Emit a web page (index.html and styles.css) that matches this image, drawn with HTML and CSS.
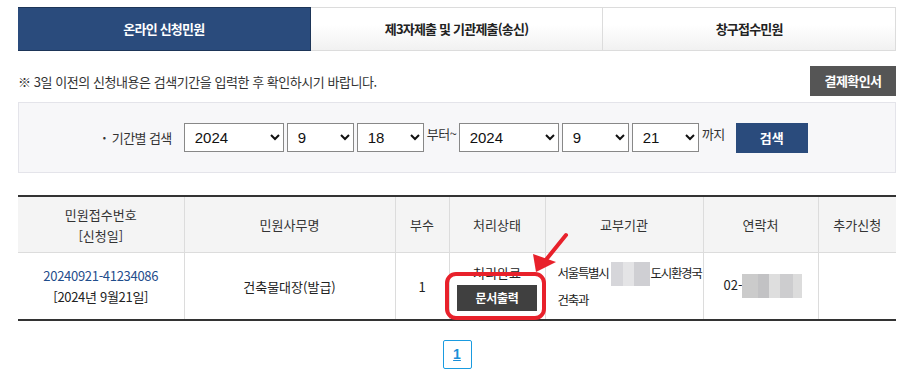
FILE: index.html
```html
<!DOCTYPE html>
<html lang="ko">
    <head>
        <meta charset="utf-8">
        <title>신청민원 조회</title>
        <link rel="stylesheet" href="styles.css">
    </head>
    <body>
        <div class="wrap">
            <ul class="tabs">
                <li class="tab on">온라인 신청민원</li>
                <li class="tab">제3자제출 및 기관제출(송신)</li>
                <li class="tab">창구접수민원</li>
            </ul>

            <div class="notice_row">
                <p class="notice">※ 3일 이전의 신청내용은 검색기간을 입력한 후 확인하시기 바랍니다.</p>
                <a class="btn_pay" href="#">결제확인서</a>
            </div>

            <div class="search_box">
                <span class="search_label">기간별 검색</span>
                <select class="sel_year"><option>2024</option></select>
                <select class="sel_small"><option>9</option></select>
                <select class="sel_small"><option>18</option></select>
                <span class="search_txt">부터~</span>
                <select class="sel_year"><option>2024</option></select>
                <select class="sel_small"><option>9</option></select>
                <select class="sel_small"><option>21</option></select>
                <span class="search_txt">까지</span>
                <a class="btn_search" href="#">검색</a>
            </div>

            <div class="table_wrap">
                <table class="list">
                    <colgroup>
                        <col style="width:166px">
                        <col style="width:211px">
                        <col style="width:54px">
                        <col style="width:96px">
                        <col style="width:158px">
                        <col style="width:115px">
                        <col style="width:78px">
                    </colgroup>
                    <thead>
                        <tr>
                            <th>민원접수번호<br>[신청일]</th>
                            <th>민원사무명</th>
                            <th>부수</th>
                            <th>처리상태</th>
                            <th>교부기관</th>
                            <th>연락처</th>
                            <th>추가신청</th>
                        </tr>
                    </thead>
                    <tbody>
                        <tr>
                            <td class="receipt"><a class="num_link" href="#">20240921-41234086</a><br>[2024년 9월21일]</td>
                            <td>건축물대장(발급)</td>
                            <td>1</td>
                            <td class="state">처리완료<br><a class="btn_print" href="#">문서출력</a></td>
                            <td class="left addr">서울특별시<span class="mosaic m_addr"></span>도시환경국<br>건축과</td>
                            <td class="left phone">02-<span class="mosaic m_tel"></span></td>
                            <td></td>
                        </tr>
                    </tbody>
                </table>

                <svg class="mark" width="560" height="130" viewBox="0 0 560 130">
                    <rect x="429" y="79" width="97" height="44" rx="9" ry="9" fill="none" stroke="#e8212b" stroke-width="4"/>
                    <line x1="548" y1="40" x2="527" y2="66" stroke="#e8212b" stroke-width="4" stroke-linecap="round"/>
                    <polygon points="518,77 515,59 538,67" fill="#e8212b"/>
                </svg>
            </div>

            <div class="paging">
                <a class="page on" href="#">1</a>
            </div>
        </div>
    </body>
</html>
```

FILE: styles.css
```css
body {
    margin: 0;
    padding: 0;
    font-family: "Noto Sans CJK KR", "Noto Sans", sans-serif;
    font-size: 13px;
    color: #333333;
    background: #ffffff;
}

a {
    text-decoration: none;
}

.wrap {
    width: 878px;
    margin: 0 0 0 18px;
    padding-top: 7px;
}

/* tabs */
.tabs {
    display: flex;
    margin: 0;
    padding: 0;
    list-style: none;
}

.tab {
    flex: 1;
    height: 42px;
    line-height: 42px;
    text-align: center;
    font-size: 13px;
    font-weight: 700;
    letter-spacing: -0.8px;
    color: #222222;
    border: 1px solid #dcdcdc;
    border-left: 0;
    background: linear-gradient(#ffffff 40%, #f1f1f1);
}

.tab.on {
    color: #ffffff;
    background: #2a4b7c;
    border-color: #1d3558;
}

/* notice */
.notice_row {
    display: flex;
    align-items: center;
    justify-content: space-between;
    margin-top: 15px;
}

.notice {
    margin: 0;
    font-size: 13px;
    letter-spacing: -0.45px;
    color: #333333;
}

.btn_pay {
    display: block;
    width: 86px;
    height: 30px;
    line-height: 30px;
    text-align: center;
    font-size: 13px;
    font-weight: 700;
    letter-spacing: -0.6px;
    color: #ffffff;
    background: #555555;
}

/* search */
.search_box {
    display: flex;
    align-items: center;
    justify-content: center;
    height: 69px;
    margin-top: 6px;
    padding-right: 4px;
    border: 1px solid #e4e4ea;
    background: #f7f7f9;
}

.search_label {
    margin-right: 12px;
    font-size: 13px;
    letter-spacing: -0.6px;
    color: #333333;
}

.search_label:before {
    content: "·";
    margin-right: 6px;
    font-weight: 700;
}

select {
    height: 29px;
    margin-right: 3px;
    padding: 0 4px 0 6px;
    font-family: "Liberation Sans", Arial, sans-serif;
    font-size: 15px;
    color: #111111;
    border: 1px solid #888888;
    border-radius: 0;
    background: #ffffff;
}

.sel_year {
    width: 100px;
}

.sel_small {
    width: 67px;
}

.search_txt {
    margin: 0 2px 8px 0;
    font-size: 13px;
    letter-spacing: -0.4px;
    color: #333333;
}

.btn_search {
    display: block;
    width: 72px;
    height: 30px;
    margin-left: 9px;
    line-height: 30px;
    text-align: center;
    font-size: 13px;
    font-weight: 700;
    color: #ffffff;
    background: #2a4b7c;
}

/* table */
.table_wrap {
    position: relative;
    margin-top: 22px;
}

.list {
    width: 100%;
    table-layout: fixed;
    border-collapse: collapse;
    border-top: 2px solid #333333;
    border-bottom: 2px solid #333333;
}

.list th {
    height: 55px;
    padding: 0;
    font-size: 13px;
    font-weight: 400;
    line-height: 21px;
    color: #333333;
    background: #f4f4f4;
    border-left: 1px solid #dcdcdc;
    border-bottom: 1px solid #dcdcdc;
}

.list td {
    height: 66px;
    padding: 0;
    text-align: center;
    font-size: 13px;
    line-height: 21px;
    color: #222222;
    border-left: 1px solid #dcdcdc;
}

.list th:first-child,
.list td:first-child {
    border-left: 0;
}

.list td.left {
    text-align: left;
    padding-left: 12px;
}

.list td.receipt {
    letter-spacing: -0.3px;
}

.list td.addr {
    font-size: 12.5px;
    letter-spacing: -1.3px;
    line-height: 27px;
}

.list td.phone {
    padding-left: 20px;
}

.num_link {
    color: #1f4d8c;
}

.state {
    line-height: 22px;
}

.btn_print {
    display: inline-block;
    width: 80px;
    height: 26px;
    margin-top: 2px;
    line-height: 26px;
    font-size: 12px;
    font-weight: 700;
    letter-spacing: -0.3px;
    color: #ffffff;
    background: #404040;
}

.mosaic {
    display: inline-block;
    vertical-align: middle;
    height: 24px;
    background:
        linear-gradient(90deg, #d6d6da 0 30%, #e4e4e6 30% 60%, #cfcfd3 60% 100%);
}

.m_addr {
    width: 39px;
    margin: 0 1px 0 2px;
}

.m_tel {
    width: 60px;
    background:
        linear-gradient(90deg, #cbcbcb 0 27%, #c2c2c4 27% 45%, #dedede 45% 63%, #cdcdcf 63% 85%, #dcdcdc 85% 100%);
}

/* annotation */
.mark {
    position: absolute;
    left: 0;
    top: 0;
    pointer-events: none;
}

/* paging */
.paging {
    display: flex;
    justify-content: center;
    margin-top: 19px;
}

.page {
    display: block;
    width: 27px;
    height: 27px;
    line-height: 27px;
    text-align: center;
    font-family: "Liberation Sans", Arial, sans-serif;
    font-size: 14px;
    font-weight: 700;
    color: #1a8fd8;
    text-decoration: underline;
    border: 1px solid #1a9be0;
    border-radius: 2px;
}
```
